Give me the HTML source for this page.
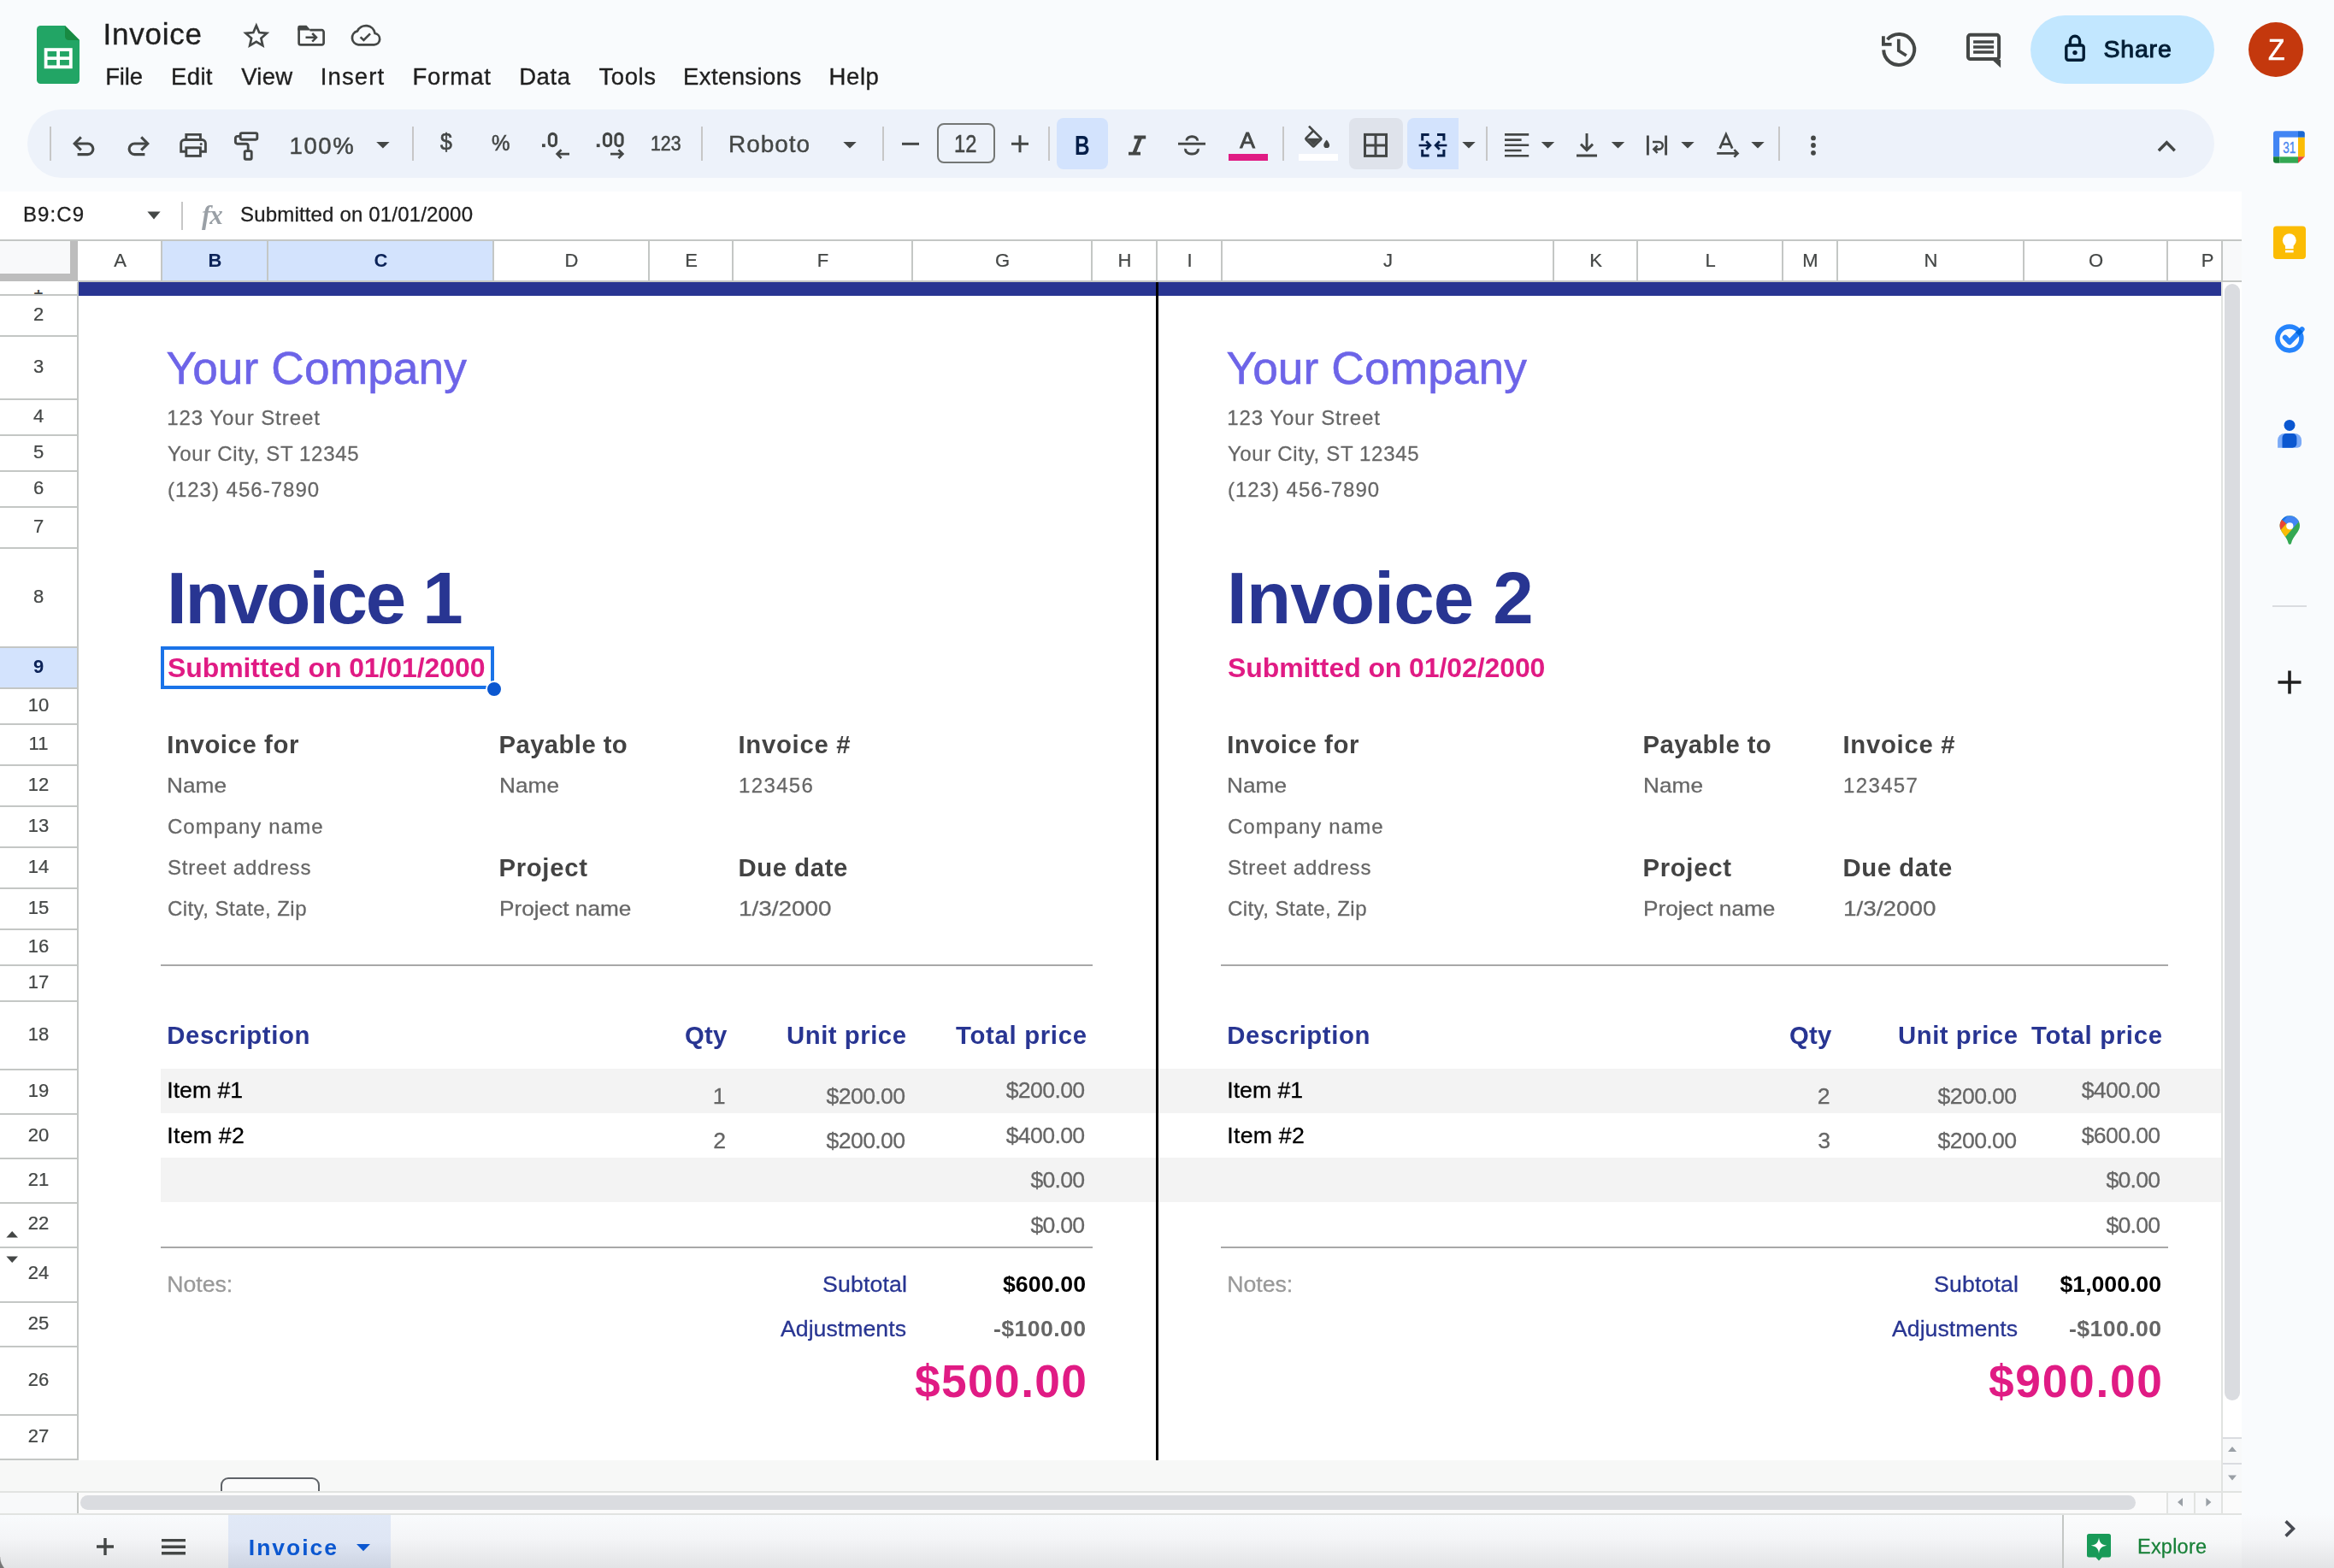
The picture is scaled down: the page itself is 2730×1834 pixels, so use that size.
<!DOCTYPE html>
<html><head><meta charset="utf-8"><title>Invoice - Google Sheets</title>
<style>
html,body{margin:0;padding:0;}
body{width:2730px;height:1834px;overflow:hidden;background:#f9fbfd;position:relative;font-family:"Liberation Sans", sans-serif;}
#r div{position:absolute;}
.t{position:absolute;white-space:pre;font-family:"Liberation Sans", sans-serif;}
svg#ic{position:absolute;left:0;top:0;}
</style></head><body>
<div id="r">
<div style="left:32px;top:128px;width:2558px;height:80px;background:#edf2fa;border-radius:40px;"></div>
<div style="left:1236px;top:138px;width:60px;height:60px;background:#d3e3fd;border-radius:8px;"></div>
<div style="left:1578px;top:138px;width:63px;height:60px;background:#dfe3eb;border-radius:8px;"></div>
<div style="left:1646px;top:138px;width:60px;height:60px;background:#d3e3fd;border-radius:8px 0 0 8px;"></div>
<div style="left:58px;top:148px;width:2px;height:40px;background:#c7c7c7;"></div>
<div style="left:482px;top:148px;width:2px;height:40px;background:#c7c7c7;"></div>
<div style="left:820px;top:148px;width:2px;height:40px;background:#c7c7c7;"></div>
<div style="left:1032px;top:148px;width:2px;height:40px;background:#c7c7c7;"></div>
<div style="left:1226px;top:148px;width:2px;height:40px;background:#c7c7c7;"></div>
<div style="left:1500px;top:148px;width:2px;height:40px;background:#c7c7c7;"></div>
<div style="left:1738px;top:148px;width:2px;height:40px;background:#c7c7c7;"></div>
<div style="left:2080px;top:148px;width:2px;height:40px;background:#c7c7c7;"></div>
<div style="left:1096px;top:144px;width:68px;height:47px;background:transparent;border:2px solid #747775;border-radius:8px;box-sizing:border-box;"></div>
<div style="left:1437px;top:180px;width:46px;height:8px;background:#e01b84;"></div>
<div style="left:1519px;top:180px;width:46px;height:8px;background:#ffffff;"></div>
<div style="left:2375px;top:18px;width:215px;height:80px;background:#c2e7ff;border-radius:40px;"></div>
<div style="left:2630px;top:26px;width:64px;height:64px;background:#c4380d;border-radius:50%;"></div>
<div style="left:0px;top:224px;width:2622px;height:57px;background:#ffffff;"></div>
<div style="left:212px;top:236px;width:2px;height:33px;background:#c7c7c7;"></div>
<div style="left:0px;top:281px;width:2622px;height:1427px;background:#ffffff;"></div>
<div style="left:0px;top:280px;width:2622px;height:2px;background:#c4c7c5;"></div>
<div style="left:2599px;top:282px;width:23px;height:47px;background:#f8f9fa;"></div>
<div style="left:2599px;top:328px;width:23px;height:2px;background:#c4c7c5;"></div>
<div style="left:190px;top:282px;width:387px;height:46px;background:#d3e3fd;"></div>
<div style="left:188px;top:282px;width:2px;height:47px;background:#c4c7c5;"></div>
<div style="left:312px;top:282px;width:2px;height:47px;background:#c4c7c5;"></div>
<div style="left:576px;top:282px;width:2px;height:47px;background:#c4c7c5;"></div>
<div style="left:758px;top:282px;width:2px;height:47px;background:#c4c7c5;"></div>
<div style="left:856px;top:282px;width:2px;height:47px;background:#c4c7c5;"></div>
<div style="left:1066px;top:282px;width:2px;height:47px;background:#c4c7c5;"></div>
<div style="left:1276px;top:282px;width:2px;height:47px;background:#c4c7c5;"></div>
<div style="left:1352px;top:282px;width:2px;height:47px;background:#c4c7c5;"></div>
<div style="left:1428px;top:282px;width:2px;height:47px;background:#c4c7c5;"></div>
<div style="left:1816px;top:282px;width:2px;height:47px;background:#c4c7c5;"></div>
<div style="left:1914px;top:282px;width:2px;height:47px;background:#c4c7c5;"></div>
<div style="left:2084px;top:282px;width:2px;height:47px;background:#c4c7c5;"></div>
<div style="left:2148px;top:282px;width:2px;height:47px;background:#c4c7c5;"></div>
<div style="left:2366px;top:282px;width:2px;height:47px;background:#c4c7c5;"></div>
<div style="left:2534px;top:282px;width:2px;height:47px;background:#c4c7c5;"></div>
<div style="left:2598px;top:282px;width:2px;height:47px;background:#c4c7c5;"></div>
<div style="left:91px;top:328px;width:2508px;height:2px;background:#c4c7c5;"></div>
<div style="left:0px;top:282px;width:91px;height:47px;background:#f8f9fa;"></div>
<div style="left:82px;top:282px;width:9px;height:47px;background:#bdbdbd;"></div>
<div style="left:0px;top:320px;width:91px;height:9px;background:#bdbdbd;"></div>
<div style="left:0px;top:330px;width:90px;height:1377px;background:#ffffff;"></div>
<div style="left:0px;top:758px;width:90px;height:46px;background:#d3e3fd;"></div>
<div style="left:90px;top:330px;width:2px;height:1378px;background:#c4c7c5;"></div>
<div style="left:0px;top:344px;width:91px;height:2px;background:#c4c7c5;"></div>
<div style="left:0px;top:392px;width:91px;height:2px;background:#c4c7c5;"></div>
<div style="left:0px;top:466px;width:91px;height:2px;background:#c4c7c5;"></div>
<div style="left:0px;top:508px;width:91px;height:2px;background:#c4c7c5;"></div>
<div style="left:0px;top:550px;width:91px;height:2px;background:#c4c7c5;"></div>
<div style="left:0px;top:592px;width:91px;height:2px;background:#c4c7c5;"></div>
<div style="left:0px;top:640px;width:91px;height:2px;background:#c4c7c5;"></div>
<div style="left:0px;top:756px;width:91px;height:2px;background:#c4c7c5;"></div>
<div style="left:0px;top:804px;width:91px;height:2px;background:#c4c7c5;"></div>
<div style="left:0px;top:846px;width:91px;height:2px;background:#c4c7c5;"></div>
<div style="left:0px;top:894px;width:91px;height:2px;background:#c4c7c5;"></div>
<div style="left:0px;top:942px;width:91px;height:2px;background:#c4c7c5;"></div>
<div style="left:0px;top:990px;width:91px;height:2px;background:#c4c7c5;"></div>
<div style="left:0px;top:1038px;width:91px;height:2px;background:#c4c7c5;"></div>
<div style="left:0px;top:1086px;width:91px;height:2px;background:#c4c7c5;"></div>
<div style="left:0px;top:1128px;width:91px;height:2px;background:#c4c7c5;"></div>
<div style="left:0px;top:1170px;width:91px;height:2px;background:#c4c7c5;"></div>
<div style="left:0px;top:1250px;width:91px;height:2px;background:#c4c7c5;"></div>
<div style="left:0px;top:1302px;width:91px;height:2px;background:#c4c7c5;"></div>
<div style="left:0px;top:1354px;width:91px;height:2px;background:#c4c7c5;"></div>
<div style="left:0px;top:1406px;width:91px;height:2px;background:#c4c7c5;"></div>
<div style="left:0px;top:1458px;width:91px;height:2px;background:#c4c7c5;"></div>
<div style="left:0px;top:1522px;width:91px;height:2px;background:#c4c7c5;"></div>
<div style="left:0px;top:1574px;width:91px;height:2px;background:#c4c7c5;"></div>
<div style="left:0px;top:1654px;width:91px;height:2px;background:#c4c7c5;"></div>
<div style="left:0px;top:1706px;width:91px;height:2px;background:#c4c7c5;"></div>
<div style="left:0;top:338.6px;width:90px;height:5.6px;overflow:hidden;"><div style="left:38.4px;top:-12.7px;font-size:22px;line-height:22px;color:#444746;font-family:'Liberation Sans',sans-serif">1</div></div>
<div style="left:92px;top:330px;width:2506px;height:16px;background:#283592;"></div>
<div style="left:188px;top:1250px;width:2410px;height:52px;background:#f3f3f3;"></div>
<div style="left:188px;top:1354px;width:2410px;height:52px;background:#f3f3f3;"></div>
<div style="left:188px;top:1128px;width:1090px;height:2px;background:#a8a8a8;"></div>
<div style="left:1428px;top:1128px;width:1108px;height:2px;background:#a8a8a8;"></div>
<div style="left:188px;top:1458px;width:1090px;height:2px;background:#a8a8a8;"></div>
<div style="left:1428px;top:1458px;width:1108px;height:2px;background:#a8a8a8;"></div>
<div style="left:1352px;top:330px;width:3px;height:1378px;background:#000000;"></div>
<div style="left:188px;top:756px;width:390px;height:50px;background:#ffffff;border:4px solid #1a73e8;box-sizing:border-box;"></div>
<div style="left:568px;top:795.5px;width:16px;height:16px;background:#0b57d0;border-radius:50%;border:2px solid #fff;"></div>
<div style="left:2598px;top:330px;width:2px;height:1415px;background:#e1e3e1;"></div>
<div style="left:2600px;top:330px;width:22px;height:1415px;background:#ffffff;"></div>
<div style="left:2602px;top:332px;width:18px;height:1306px;background:#dadce0;border-radius:9px;"></div>
<div style="left:2600px;top:1681px;width:22px;height:2px;background:#dadce0;"></div>
<div style="left:2600px;top:1683px;width:22px;height:28px;background:#f8f9fa;"></div>
<div style="left:2600px;top:1711px;width:22px;height:2px;background:#dadce0;"></div>
<div style="left:2600px;top:1713px;width:22px;height:31px;background:#f8f9fa;"></div>
<div style="left:0px;top:1708px;width:2598px;height:37px;background:#f7f8f7;"></div>
<div style="left:258px;top:1728px;width:116px;height:30px;background:#fbfbfb;border:2px solid #5f6368;border-radius:9px;box-sizing:border-box;"></div>
<div style="left:0px;top:1744px;width:2622px;height:2px;background:#e1e3e1;"></div>
<div style="left:0px;top:1746px;width:2622px;height:24px;background:#fbfbfb;"></div>
<div style="left:0px;top:1746px;width:90px;height:24px;background:#f8f9fa;"></div>
<div style="left:90px;top:1746px;width:2px;height:24px;background:#c4c7c5;"></div>
<div style="left:94px;top:1748.5px;width:2404px;height:17px;background:#dadce0;border-radius:8.5px;"></div>
<div style="left:2534px;top:1746px;width:2px;height:24px;background:#e1e3e1;"></div>
<div style="left:2536px;top:1746px;width:30px;height:24px;background:#f8f9fa;"></div>
<div style="left:2566px;top:1746px;width:2px;height:24px;background:#e1e3e1;"></div>
<div style="left:2568px;top:1746px;width:30px;height:24px;background:#f8f9fa;"></div>
<div style="left:2598px;top:1746px;width:2px;height:24px;background:#e1e3e1;"></div>
<div style="left:0px;top:1770px;width:2730px;height:64px;background:linear-gradient(#f9fbfd 0%,#f4f5f7 45%,#e3e4e6 100%);"></div>
<div style="left:0px;top:1770px;width:2622px;height:2px;background:#e1e3e1;"></div>
<div style="left:267px;top:1772px;width:190px;height:62px;background:linear-gradient(#e1e9f7 0%,#dfe6f4 50%,#cdd4e2 100%);"></div>
<div style="left:2412px;top:1772px;width:2px;height:62px;background:#c4c7c5;"></div>
<div style="left:2414px;top:1772px;width:208px;height:62px;background:linear-gradient(#fbfcfd 0%,#f6f7f8 50%,#e6e7e9 100%);"></div>
<div style="left:2622px;top:210px;width:108px;height:1560px;background:#f9fbfd;"></div>
<div style="left:2658px;top:708px;width:40px;height:2px;background:#dadce0;"></div>
<div style="left:0px;top:1821px;width:20px;height:13px;background:radial-gradient(circle 20px at 20px 0px, rgba(0,0,0,0) 19.2px, #767676 20.4px);"></div>
</div>
<svg id="ic" width="2730" height="1834" viewBox="0 0 2730 1834">
<defs>
  <path id="dd" d="M-7.7,-3.7 H7.7 L0,3.7 Z"/>
  <clipPath id="pin"><path d="M2678.3,603.2 a11.7,11.7 0 0 1 11.7,11.7 c0,7.4 -8.2,11.8 -10,20.6 a1.75,1.75 0 0 1 -3.4,0 c-1.8,-8.8 -10,-13.2 -10,-20.6 a11.7,11.7 0 0 1 11.7,-11.7 Z"/></clipPath>
</defs>
<!-- Sheets logo -->
<g>
  <path d="M47.5,30 H76 L93,47 V93.5 a4.5,4.5 0 0 1 -4.5,4.5 H47.5 a4.5,4.5 0 0 1 -4.5,-4.5 V34.5 a4.5,4.5 0 0 1 4.5,-4.5 Z" fill="#22a565"/>
  <path d="M76,30 L93,47 H80.5 a4.5,4.5 0 0 1 -4.5,-4.5 Z" fill="#188a42"/>
  <rect x="51.7" y="56.2" width="33" height="24" fill="#fff"/>
  <rect x="55.5" y="60" width="10.7" height="6.3" fill="#22a565"/>
  <rect x="70" y="60" width="10.9" height="6.3" fill="#22a565"/>
  <rect x="55.5" y="70" width="10.7" height="6.4" fill="#22a565"/>
  <rect x="70" y="70" width="10.9" height="6.4" fill="#22a565"/>
</g>
<!-- title icons -->
<g fill="none" stroke="#444746" stroke-width="2.7" stroke-linejoin="miter">
  <path d="M299.8,30.0 L303.2,38.1 L312.0,38.9 L305.4,44.7 L307.3,53.3 L299.8,48.8 L292.2,53.3 L294.1,44.7 L287.5,38.9 L296.3,38.1 Z"/>
  <path d="M349.6,33 V50.2 a2.2,2.2 0 0 0 2.2,2.2 H376.4 a2.2,2.2 0 0 0 2.2,-2.2 V37.4 a2.2,2.2 0 0 0 -2.2,-2.2 H362.5"/>
  <path d="M348.2,35.5 V32 a2.2,2.2 0 0 1 2.2,-2.2 H358.5 L363.6,35.5 Z" fill="#444746" stroke="none"/>
  <path d="M357.5,43.8 H369.5 M365.2,39 L370,43.8 L365.2,48.6" stroke-width="2.5"/>
  <path d="M419.2,52.3 H437.6 a6.7,6.7 0 0 0 1,-13.3 a10.9,10.9 0 0 0 -20.6,-2.6 a8.1,8.1 0 0 0 1.2,15.9 Z"/>
  <path d="M421.6,43.4 L425.4,47 L433,39.4" stroke-width="2.6"/>
</g>
<!-- history -->
<g fill="none" stroke="#444746" stroke-width="4">
  <path d="M2203.2,58.4 A18,18 0 1 0 2207.6,46.2"/>
  <path d="M2220.8,45.8 V59.2 L2229.8,65" stroke-width="3.7"/>
  <path d="M2202.9,42.2 V51.8 H2212.6" stroke-width="3.8"/>
</g>
<!-- comment -->
<g>
  <rect x="2302" y="40.8" width="36.1" height="28.3" rx="2.6" fill="none" stroke="#444746" stroke-width="4"/>
  <path d="M2330.2,70 H2340.1 V79.2 Z" fill="#444746"/>
  <path d="M2308.1,49.1 H2332.1 M2308.1,55.1 H2332.1 M2308.1,61.1 H2332.1" stroke="#444746" stroke-width="3.5"/>
</g>
<!-- lock -->
<g fill="none" stroke="#001d35" stroke-width="3.4">
  <rect x="2416.8" y="53" width="20.4" height="17.2" rx="2.5"/>
  <path d="M2421.4,53 V47.8 a5.6,5.6 0 0 1 11.2,0 V53"/>
  <circle cx="2427" cy="61.6" r="2.7" fill="#001d35" stroke="none"/>
</g>

<!-- ===== toolbar icons ===== -->
<g fill="none" stroke="#444746" stroke-width="2.9">
  <path d="M88.6,168 H102.6 a6.3,6.3 0 0 1 0,12.6 H90.6" stroke-width="3.1"/>
  <path d="M94.8,160.4 L87.2,168 L94.8,175.600" stroke-width="3.1"/>
  <path d="M171.4,168 H157.4 a6.3,6.3 0 0 0 0,12.6 H169.4" stroke-width="3.1"/>
  <path d="M165.2,160.4 L172.8,168 L165.2,175.600" stroke-width="3.1"/>
  <path d="M217.8,163.5 V157.4 H234.4 V163.5"/>
  <path d="M217.5,177.3 H211.7 V167.5 a4,4 0 0 1 4,-4 H236.4 a4,4 0 0 1 4,4 V177.3 H234.6"/>
  <rect x="217.8" y="172.8" width="16.6" height="9.6"/>
  <circle cx="235.2" cy="168.6" r="1.5" fill="#444746" stroke="none"/>
  <rect x="281.2" y="155.6" width="19.6" height="7.6" rx="1.6"/>
  <path d="M281.2,159.4 H277.6 a2.2,2.2 0 0 0 -2.2,2.2 V166 a2.2,2.2 0 0 0 2.2,2.2 H288 a2.2,2.2 0 0 1 2.2,2.2 V176.4"/>
  <rect x="286.2" y="176.6" width="8" height="9.6" rx="1.4"/>
</g>
<g fill="#444746">
  <use href="#dd" x="447.9" y="169.7"/>
  <use href="#dd" x="994" y="169.7"/>
  <use href="#dd" x="1718" y="169.8"/>
  <use href="#dd" x="1810.5" y="169.8"/>
  <use href="#dd" x="1892.5" y="169.8"/>
  <use href="#dd" x="1974" y="169.8"/>
  <use href="#dd" x="2056" y="169.8"/>
</g>
<g fill="#444746">
  <rect x="634" y="168.3" width="3.8" height="3.8"/>
  <rect x="697.8" y="168.3" width="3.8" height="3.8"/>
</g>
<g fill="none" stroke="#444746" stroke-width="3.1">
  <rect x="642.3" y="156.4" width="8.2" height="14.2" rx="4.1"/>
  <rect x="706.4" y="156.4" width="8.2" height="14.2" rx="4.1"/>
  <rect x="719.9" y="156.4" width="8.2" height="14.2" rx="4.1"/>
  <path d="M666,180.1 H652 M656.6,175.2 L651.6,180.1 L656.6,185" stroke-width="2.6"/>
  <path d="M714,180.1 H728 M723.4,175.2 L728.4,180.1 L723.4,185" stroke-width="2.6"/>
  <path d="M1055,168.3 H1075" stroke-width="3"/>
  <path d="M1183,168.3 H1203 M1193,158.3 V178.3" stroke-width="3"/>
</g>
<!-- italic -->
<path d="M1326.5,158.6 H1340.2 V162.6 H1335.6 L1329.4,177.8 H1334 V181.6 H1320 V177.8 H1324.8 L1331,162.6 H1326.5 Z" fill="#444746"/>
<!-- strikethrough -->
<g fill="none" stroke="#444746" stroke-width="2.9">
  <path d="M1378,168.2 H1410"/>
  <path d="M1400.6,164.6 a5.8,4.6 0 0 0 -6.4,-4.8 a5.8,4.6 0 0 0 -6.2,4.6"/>
  <path d="M1386.8,174 a6.6,5 0 0 0 7.4,6 a6.4,5 0 0 0 7,-6"/>
</g>
<!-- fill bucket -->
<g>
  <path d="M1531,147.6 L1545,161.6 a1,1 0 0 1 0,1.4 L1537.2,170.8 a1.3,1.3 0 0 1 -1.8,0 L1527.8,163.2 a1.3,1.3 0 0 1 0,-1.8 L1535.8,153.4" fill="none" stroke="#444746" stroke-width="2.7"/>
  <path d="M1528.2,161.8 H1544.6 L1536.4,170 Z" fill="#444746"/>
  <path d="M1551.7,163.4 c0,0 3.4,3.9 3.4,6.3 a3.4,3.4 0 0 1 -6.8,0 c0,-2.4 3.4,-6.3 3.4,-6.3 Z" fill="#444746"/>
</g>
<!-- borders -->
<g fill="none" stroke="#444746" stroke-width="3">
  <rect x="1596.5" y="157.4" width="25" height="25"/>
  <path d="M1609,157.4 V182.4 M1596.5,169.9 H1621.5"/>
</g>
<!-- merge -->
<g fill="none" stroke="#041e49" stroke-width="3">
  <path d="M1671.6,157.5 H1663.7 V164.6 M1663.7,175 V182.1 H1671.6 M1681,157.5 H1688.9 V164.6 M1688.9,175 V182.1 H1681"/>
  <path d="M1659.6,170 H1672.4 M1668.2,165.3 L1672.9,170 L1668.2,174.7" stroke-width="2.7"/>
  <path d="M1692.4,170 H1679.6 M1683.8,165.3 L1679.1,170 L1683.8,174.7" stroke-width="2.7"/>
</g>
<g fill="none" stroke="#444746" stroke-width="2.9">
  <path d="M1760,157.4 H1788.2 M1760,163.6 H1779.6 M1760,169.8 H1788.2 M1760,176 H1779.6 M1760,182.2 H1788.2" stroke-width="2.6"/>
  <path d="M1844,182 H1868 M1856,156 V175.4 M1849,168.6 L1856,175.6 L1863,168.6"/>
  <path d="M1927.4,158.6 V181.6 M1948.6,158.6 V181.6"/>
  <path d="M1933,166 H1940.5 a4.3,4.3 0 0 1 0,8.6 H1935 M1938.6,170.4 L1934.4,174.6 L1938.6,178.8" stroke-width="2.6"/>
  <path d="M2008.2,179.4 H2032 M2028.4,175.2 L2032.6,179.4 L2028.4,183.6" stroke-width="2.6"/>
  <path d="M2011.6,173.6 L2018.9,157 L2026.2,173.6 M2013.9,168.6 H2023.9" stroke-width="2.7"/>
  <path d="M2524.9,176.2 L2534.3,166.8 L2543.7,176.2" stroke-width="3.5"/>
</g>
<g fill="#444746">
  <circle cx="2121" cy="161.4" r="2.9"/>
  <circle cx="2121" cy="170" r="2.9"/>
  <circle cx="2121" cy="178.8" r="2.9"/>
</g>
<path d="M172.4,247.6 H187.6 L180,256.4 Z" fill="#444746"/>

<!-- ===== side panel ===== -->
<g>
  <path d="M2662,153.2 H2688 V160.8 H2666.4 V183.2 H2659 V156.2 a3,3 0 0 1 3,-3 Z" fill="#4285f4"/>
  <path d="M2688,153.2 H2692.800 a3,3 0 0 1 3,3 V160.8 H2688 Z" fill="#1967d2"/>
  <rect x="2688" y="160.8" width="7.8" height="22.4" fill="#fbbc04"/>
  <path d="M2659,183.2 H2666.4 V190.7 H2662 a3,3 0 0 1 -3,-3 Z" fill="#188038"/>
  <rect x="2666.4" y="183.2" width="21.6" height="7.5" fill="#34a853"/>
  <path d="M2688,183.2 H2695.800 L2688,190.7 Z" fill="#ea4335"/>
  <rect x="2666.4" y="160.8" width="21.6" height="22.4" fill="#fff"/>
  <text x="2670.2" y="178.9" font-family="Liberation Sans, sans-serif" font-size="18.4" fill="#4a87ee" stroke="#4a87ee" stroke-width="0.4" textLength="15" lengthAdjust="spacingAndGlyphs">31</text>
</g>
<g>
  <rect x="2659" y="264.6" width="38" height="38.4" rx="4" fill="#fbbc04"/>
  <circle cx="2677.800" cy="281.2" r="7.9" fill="#fff"/>
  <rect x="2673" y="285" width="9.6" height="6" fill="#fff"/>
  <rect x="2673" y="292.6" width="9.6" height="2.8" fill="#fff"/>
</g>
<g fill="none" stroke-linecap="round" stroke-linejoin="round">
  <circle cx="2677.9" cy="395.9" r="14" stroke="#2684fc" stroke-width="5.5"/>
  <path d="M2672.800,394.6 L2678,400.2 L2692.600,385.2" stroke="#2684fc" stroke-width="6"/>
  <path d="M2687.2,390.8 L2691.600,386.200" stroke="#0066da" stroke-width="6" stroke-linecap="butt"/>
</g>
<g>
  <circle cx="2678" cy="497.4" r="6.5" fill="#0b57d0"/>
  <path d="M2664.1,523.8 V515 a8,8 0 0 1 8,-8 H2684 a8,8 0 0 1 8,8 V518.800 a5,5 0 0 1 -5,5 Z" fill="#7baaf7"/>
  <path d="M2669.5,523.8 V512 a5,5 0 0 1 5,-5 H2681.400 a5,5 0 0 1 5,5 V518.800 a5,5 0 0 1 -5,5 Z" fill="#0b57d0"/>
</g>
<g clip-path="url(#pin)">
  <rect x="2660" y="598" width="36" height="42" fill="#34a853"/>
  <path d="M2662,601.3 V598 H2696 L2695.500,602.8 L2681.050,618.950 Z" fill="#4285f4"/>
  <path d="M2662,601.3 L2674.160,612.570 L2664.1,623.8 H2660 V601.3 Z" fill="#ea4335"/>
  <path d="M2664.1,623.8 L2674.160,612.570 L2681.050,618.950 L2669.9,631.4 H2660 V623.8 Z" fill="#fbbc04"/>
  <path d="M2662,601.3 L2671,609.6 L2676,603 L2668,598 Z" fill="#1a73e8"/>
  <circle cx="2678.3" cy="615.3" r="4.1" fill="#fff"/>
</g>
<path d="M2664.5,798 H2691.5 M2678,784.5 V811.5" stroke="#1f1f1f" stroke-width="3.6" fill="none"/>

<!-- ===== bottom ===== -->
<path d="M113,1809 H133 M123,1799 V1819" stroke="#444746" stroke-width="3.4" fill="none"/>
<path d="M189,1801.600 H217 M189,1809.200 H217 M189,1816.800 H217" stroke="#444746" stroke-width="3.4" fill="none"/>
<path d="M417,1806 H433 L425,1814.200 Z" fill="#0b57d0"/>
<g>
  <path d="M2443.5,1794 H2466.5 a2.5,2.5 0 0 1 2.5,2.5 V1819 a2.5,2.5 0 0 1 -2.5,2.5 H2458.600 L2455,1825.600 L2451.400,1821.500 H2443.500 a2.5,2.5 0 0 1 -2.5,-2.5 V1796.500 a2.5,2.5 0 0 1 2.5,-2.5 Z" fill="#189a58"/>
  <path d="M2455,1798.600 C2455.800,1804.600 2458,1806.900 2464.200,1807.800 C2458,1808.700 2455.800,1811 2455,1817 C2454.200,1811 2452,1808.700 2445.800,1807.800 C2452,1806.900 2454.200,1804.600 2455,1798.600 Z" fill="#fff"/>
</g>
<path d="M2673.600,1779.400 L2682.400,1788 L2673.600,1796.600" stroke="#474a52" stroke-width="3.6" fill="none"/>
<g fill="#9aa0a6">
  <path d="M2606,1698 H2616 L2611,1692 Z"/>
  <path d="M2606,1725.600 H2616 L2611,1731.600 Z"/>
  <path d="M2553,1752 V1762 L2547,1757 Z"/>
  <path d="M2580.400,1752 V1762 L2586.400,1757 Z"/>
</g>
<g fill="#444746">
  <path d="M7.4,1447.400 H21 L14.200,1440 Z"/>
  <path d="M7.4,1469.600 H21 L14.200,1477 Z"/>
</g>

</svg>
<div id="tx" style="will-change:transform;position:absolute;left:0;top:0;width:2730px;height:1834px;">
<div class="t" style="left:133.16px;top:293.98px;font-size:22px;line-height:22px;color:#444746;-webkit-text-stroke:0.24px #444746;">A</div>
<div class="t" style="left:243.55px;top:293.98px;font-size:22px;line-height:22px;color:#0c2358;font-weight:700;">B</div>
<div class="t" style="left:437.55px;top:293.98px;font-size:22px;line-height:22px;color:#0c2358;font-weight:700;">C</div>
<div class="t" style="left:660.55px;top:293.98px;font-size:22px;line-height:22px;color:#444746;-webkit-text-stroke:0.24px #444746;">D</div>
<div class="t" style="left:801.16px;top:293.98px;font-size:22px;line-height:22px;color:#444746;-webkit-text-stroke:0.24px #444746;">E</div>
<div class="t" style="left:955.77px;top:293.98px;font-size:22px;line-height:22px;color:#444746;-webkit-text-stroke:0.24px #444746;">F</div>
<div class="t" style="left:1163.94px;top:293.98px;font-size:22px;line-height:22px;color:#444746;-webkit-text-stroke:0.24px #444746;">G</div>
<div class="t" style="left:1307.55px;top:293.98px;font-size:22px;line-height:22px;color:#444746;-webkit-text-stroke:0.24px #444746;">H</div>
<div class="t" style="left:1388.44px;top:293.98px;font-size:22px;line-height:22px;color:#444746;-webkit-text-stroke:0.24px #444746;">I</div>
<div class="t" style="left:1618.00px;top:293.98px;font-size:22px;line-height:22px;color:#444746;-webkit-text-stroke:0.24px #444746;">J</div>
<div class="t" style="left:1859.16px;top:293.98px;font-size:22px;line-height:22px;color:#444746;-webkit-text-stroke:0.24px #444746;">K</div>
<div class="t" style="left:1994.38px;top:293.98px;font-size:22px;line-height:22px;color:#444746;-webkit-text-stroke:0.24px #444746;">L</div>
<div class="t" style="left:2108.34px;top:293.98px;font-size:22px;line-height:22px;color:#444746;-webkit-text-stroke:0.24px #444746;">M</div>
<div class="t" style="left:2250.55px;top:293.98px;font-size:22px;line-height:22px;color:#444746;-webkit-text-stroke:0.24px #444746;">N</div>
<div class="t" style="left:2442.94px;top:293.98px;font-size:22px;line-height:22px;color:#444746;-webkit-text-stroke:0.24px #444746;">O</div>
<div class="t" style="left:2574.66px;top:293.98px;font-size:22px;line-height:22px;color:#444746;-webkit-text-stroke:0.24px #444746;">P</div>
<div class="t" style="left:38.88px;top:357.18px;font-size:22px;line-height:22px;color:#444746;-webkit-text-stroke:0.24px #444746;">2</div>
<div class="t" style="left:38.88px;top:418.18px;font-size:22px;line-height:22px;color:#444746;-webkit-text-stroke:0.24px #444746;">3</div>
<div class="t" style="left:38.88px;top:476.18px;font-size:22px;line-height:22px;color:#444746;-webkit-text-stroke:0.24px #444746;">4</div>
<div class="t" style="left:38.88px;top:518.18px;font-size:22px;line-height:22px;color:#444746;-webkit-text-stroke:0.24px #444746;">5</div>
<div class="t" style="left:38.88px;top:560.18px;font-size:22px;line-height:22px;color:#444746;-webkit-text-stroke:0.24px #444746;">6</div>
<div class="t" style="left:38.88px;top:605.18px;font-size:22px;line-height:22px;color:#444746;-webkit-text-stroke:0.24px #444746;">7</div>
<div class="t" style="left:38.88px;top:687.18px;font-size:22px;line-height:22px;color:#444746;-webkit-text-stroke:0.24px #444746;">8</div>
<div class="t" style="left:38.88px;top:769.18px;font-size:22px;line-height:22px;color:#0c2358;font-weight:700;">9</div>
<div class="t" style="left:32.76px;top:814.18px;font-size:22px;line-height:22px;color:#444746;-webkit-text-stroke:0.24px #444746;">10</div>
<div class="t" style="left:33.58px;top:859.18px;font-size:22px;line-height:22px;color:#444746;-webkit-text-stroke:0.24px #444746;">11</div>
<div class="t" style="left:32.76px;top:907.18px;font-size:22px;line-height:22px;color:#444746;-webkit-text-stroke:0.24px #444746;">12</div>
<div class="t" style="left:32.76px;top:955.18px;font-size:22px;line-height:22px;color:#444746;-webkit-text-stroke:0.24px #444746;">13</div>
<div class="t" style="left:32.76px;top:1003.18px;font-size:22px;line-height:22px;color:#444746;-webkit-text-stroke:0.24px #444746;">14</div>
<div class="t" style="left:32.76px;top:1051.18px;font-size:22px;line-height:22px;color:#444746;-webkit-text-stroke:0.24px #444746;">15</div>
<div class="t" style="left:32.76px;top:1096.18px;font-size:22px;line-height:22px;color:#444746;-webkit-text-stroke:0.24px #444746;">16</div>
<div class="t" style="left:32.76px;top:1138.18px;font-size:22px;line-height:22px;color:#444746;-webkit-text-stroke:0.24px #444746;">17</div>
<div class="t" style="left:32.76px;top:1199.18px;font-size:22px;line-height:22px;color:#444746;-webkit-text-stroke:0.24px #444746;">18</div>
<div class="t" style="left:32.76px;top:1265.18px;font-size:22px;line-height:22px;color:#444746;-webkit-text-stroke:0.24px #444746;">19</div>
<div class="t" style="left:32.76px;top:1317.18px;font-size:22px;line-height:22px;color:#444746;-webkit-text-stroke:0.24px #444746;">20</div>
<div class="t" style="left:32.76px;top:1369.18px;font-size:22px;line-height:22px;color:#444746;-webkit-text-stroke:0.24px #444746;">21</div>
<div class="t" style="left:32.76px;top:1420.38px;font-size:22px;line-height:22px;color:#444746;-webkit-text-stroke:0.24px #444746;">22</div>
<div class="t" style="left:32.76px;top:1478.38px;font-size:22px;line-height:22px;color:#444746;-webkit-text-stroke:0.24px #444746;">24</div>
<div class="t" style="left:32.76px;top:1537.18px;font-size:22px;line-height:22px;color:#444746;-webkit-text-stroke:0.24px #444746;">25</div>
<div class="t" style="left:32.76px;top:1603.18px;font-size:22px;line-height:22px;color:#444746;-webkit-text-stroke:0.24px #444746;">26</div>
<div class="t" style="left:32.76px;top:1669.18px;font-size:22px;line-height:22px;color:#444746;-webkit-text-stroke:0.24px #444746;">27</div>
<div class="t" style="left:194.40px;top:404.28px;font-size:53.3px;line-height:53.3px;color:#6d64e8;letter-spacing:0.091px;-webkit-text-stroke:0.59px #6d64e8;">Your Company</div>
<div class="t" style="left:195.30px;top:477.18px;font-size:24px;line-height:24px;color:#666666;letter-spacing:0.938px;-webkit-text-stroke:0.26px #666666;">123 Your Street</div>
<div class="t" style="left:195.90px;top:519.08px;font-size:24px;line-height:24px;color:#666666;letter-spacing:0.662px;-webkit-text-stroke:0.26px #666666;">Your City, ST 12345</div>
<div class="t" style="left:195.90px;top:560.98px;font-size:24px;line-height:24px;color:#666666;letter-spacing:1.006px;-webkit-text-stroke:0.26px #666666;">(123) 456-7890</div>
<div class="t" style="left:195.00px;top:657.09px;font-size:85.3px;line-height:85.3px;color:#283592;letter-spacing:-2.295px;font-weight:700;">Invoice 1</div>
<div class="t" style="left:196.00px;top:764.61px;font-size:32px;line-height:32px;color:#e01b84;letter-spacing:-0.089px;font-weight:700;">Submitted on 01/01/2000</div>
<div class="t" style="left:195.30px;top:856.20px;font-size:29.3px;line-height:29.3px;color:#434343;letter-spacing:0.584px;font-weight:700;">Invoice for</div>
<div class="t" style="left:583.50px;top:856.20px;font-size:29.3px;line-height:29.3px;color:#434343;letter-spacing:0.406px;font-weight:700;">Payable to</div>
<div class="t" style="left:863.50px;top:856.20px;font-size:29.3px;line-height:29.3px;color:#434343;letter-spacing:0.714px;font-weight:700;">Invoice #</div>
<div class="t" style="left:195.30px;top:907.08px;font-size:24px;line-height:24px;color:#666666;transform:scaleX(1.0932);transform-origin:0 0;-webkit-text-stroke:0.26px #666666;">Name</div>
<div class="t" style="left:583.50px;top:907.08px;font-size:24px;line-height:24px;color:#666666;transform:scaleX(1.0932);transform-origin:0 0;-webkit-text-stroke:0.26px #666666;">Name</div>
<div class="t" style="left:864.00px;top:907.08px;font-size:24px;line-height:24px;color:#666666;letter-spacing:1.361px;-webkit-text-stroke:0.26px #666666;">123456</div>
<div class="t" style="left:195.90px;top:954.88px;font-size:24px;line-height:24px;color:#666666;letter-spacing:1.125px;-webkit-text-stroke:0.26px #666666;">Company name</div>
<div class="t" style="left:195.90px;top:1002.98px;font-size:24px;line-height:24px;color:#666666;letter-spacing:0.885px;-webkit-text-stroke:0.26px #666666;">Street address</div>
<div class="t" style="left:583.50px;top:1000.20px;font-size:29.3px;line-height:29.3px;color:#434343;letter-spacing:0.679px;font-weight:700;">Project</div>
<div class="t" style="left:863.50px;top:1000.20px;font-size:29.3px;line-height:29.3px;color:#434343;letter-spacing:0.581px;font-weight:700;">Due date</div>
<div class="t" style="left:195.90px;top:1051.08px;font-size:24px;line-height:24px;color:#666666;letter-spacing:0.466px;-webkit-text-stroke:0.26px #666666;">City, State, Zip</div>
<div class="t" style="left:583.50px;top:1051.08px;font-size:24px;line-height:24px;color:#666666;transform:scaleX(1.0919);transform-origin:0 0;-webkit-text-stroke:0.26px #666666;">Project name</div>
<div class="t" style="left:864.00px;top:1051.08px;font-size:24px;line-height:24px;color:#666666;transform:scaleX(1.1614);transform-origin:0 0;-webkit-text-stroke:0.26px #666666;">1/3/2000</div>
<div class="t" style="left:195.30px;top:1196.20px;font-size:29.3px;line-height:29.3px;color:#283592;letter-spacing:0.583px;font-weight:700;">Description</div>
<div class="t" style="left:800.90px;top:1196.20px;font-size:29.3px;line-height:29.3px;color:#283592;letter-spacing:0.328px;font-weight:700;">Qty</div>
<div class="t" style="left:920.00px;top:1196.20px;font-size:29.3px;line-height:29.3px;color:#283592;letter-spacing:0.542px;font-weight:700;">Unit price</div>
<div class="t" style="left:1118.00px;top:1196.20px;font-size:29.3px;line-height:29.3px;color:#283592;letter-spacing:0.702px;font-weight:700;">Total price</div>
<div class="t" style="left:195.30px;top:1262.42px;font-size:26.67px;line-height:26.67px;color:#000000;-webkit-text-stroke:0.29px #000000;">Item #1</div>
<div class="t" style="left:195.30px;top:1314.72px;font-size:26.67px;line-height:26.67px;color:#000000;letter-spacing:0.266px;-webkit-text-stroke:0.29px #000000;">Item #2</div>
<div class="t" style="left:833.67px;top:1269.02px;font-size:26.67px;line-height:26.67px;color:#666666;-webkit-text-stroke:0.29px #666666;">1</div>
<div class="t" style="left:834.17px;top:1321.12px;font-size:26.67px;line-height:26.67px;color:#666666;-webkit-text-stroke:0.29px #666666;">2</div>
<div class="t" style="left:966.60px;top:1269.02px;font-size:26.67px;line-height:26.67px;color:#666666;letter-spacing:-0.643px;-webkit-text-stroke:0.29px #666666;">$200.00</div>
<div class="t" style="left:966.60px;top:1321.12px;font-size:26.67px;line-height:26.67px;color:#666666;letter-spacing:-0.643px;-webkit-text-stroke:0.29px #666666;">$200.00</div>
<div class="t" style="left:1176.70px;top:1262.42px;font-size:26.67px;line-height:26.67px;color:#666666;letter-spacing:-0.643px;-webkit-text-stroke:0.29px #666666;">$200.00</div>
<div class="t" style="left:1176.70px;top:1314.72px;font-size:26.67px;line-height:26.67px;color:#666666;letter-spacing:-0.643px;-webkit-text-stroke:0.29px #666666;">$400.00</div>
<div class="t" style="left:1205.40px;top:1367.42px;font-size:26.67px;line-height:26.67px;color:#666666;letter-spacing:-0.730px;-webkit-text-stroke:0.29px #666666;">$0.00</div>
<div class="t" style="left:1205.40px;top:1419.62px;font-size:26.67px;line-height:26.67px;color:#666666;letter-spacing:-0.730px;-webkit-text-stroke:0.29px #666666;">$0.00</div>
<div class="t" style="left:195.30px;top:1489.22px;font-size:26.67px;line-height:26.67px;color:#999999;letter-spacing:-0.029px;-webkit-text-stroke:0.29px #999999;">Notes:</div>
<div class="t" style="left:962.00px;top:1489.42px;font-size:26.67px;line-height:26.67px;color:#283592;letter-spacing:0.167px;-webkit-text-stroke:0.29px #283592;">Subtotal</div>
<div class="t" style="left:1172.90px;top:1489.42px;font-size:26.67px;line-height:26.67px;color:#000000;letter-spacing:0.123px;font-weight:700;">$600.00</div>
<div class="t" style="left:913.00px;top:1541.12px;font-size:26.67px;line-height:26.67px;color:#283592;letter-spacing:0.031px;-webkit-text-stroke:0.29px #283592;">Adjustments</div>
<div class="t" style="left:1162.00px;top:1541.12px;font-size:26.67px;line-height:26.67px;color:#666666;letter-spacing:0.395px;font-weight:700;">-$100.00</div>
<div class="t" style="left:1070.00px;top:1588.88px;font-size:53.3px;line-height:53.3px;color:#e01b84;letter-spacing:1.391px;font-weight:700;">$500.00</div>
<div class="t" style="left:1434.40px;top:404.28px;font-size:53.3px;line-height:53.3px;color:#6d64e8;letter-spacing:0.091px;-webkit-text-stroke:0.59px #6d64e8;">Your Company</div>
<div class="t" style="left:1435.30px;top:477.18px;font-size:24px;line-height:24px;color:#666666;letter-spacing:0.938px;-webkit-text-stroke:0.26px #666666;">123 Your Street</div>
<div class="t" style="left:1435.90px;top:519.08px;font-size:24px;line-height:24px;color:#666666;letter-spacing:0.662px;-webkit-text-stroke:0.26px #666666;">Your City, ST 12345</div>
<div class="t" style="left:1435.90px;top:560.98px;font-size:24px;line-height:24px;color:#666666;letter-spacing:1.006px;-webkit-text-stroke:0.26px #666666;">(123) 456-7890</div>
<div class="t" style="left:1435.00px;top:657.09px;font-size:85.3px;line-height:85.3px;color:#283592;letter-spacing:-0.783px;font-weight:700;">Invoice 2</div>
<div class="t" style="left:1436.00px;top:764.61px;font-size:32px;line-height:32px;color:#e01b84;letter-spacing:-0.094px;font-weight:700;">Submitted on 01/02/2000</div>
<div class="t" style="left:1435.30px;top:856.20px;font-size:29.3px;line-height:29.3px;color:#434343;letter-spacing:0.584px;font-weight:700;">Invoice for</div>
<div class="t" style="left:1921.50px;top:856.20px;font-size:29.3px;line-height:29.3px;color:#434343;letter-spacing:0.406px;font-weight:700;">Payable to</div>
<div class="t" style="left:2155.50px;top:856.20px;font-size:29.3px;line-height:29.3px;color:#434343;letter-spacing:0.714px;font-weight:700;">Invoice #</div>
<div class="t" style="left:1435.30px;top:907.08px;font-size:24px;line-height:24px;color:#666666;transform:scaleX(1.0932);transform-origin:0 0;-webkit-text-stroke:0.26px #666666;">Name</div>
<div class="t" style="left:1921.50px;top:907.08px;font-size:24px;line-height:24px;color:#666666;transform:scaleX(1.0932);transform-origin:0 0;-webkit-text-stroke:0.26px #666666;">Name</div>
<div class="t" style="left:2156.00px;top:907.08px;font-size:24px;line-height:24px;color:#666666;letter-spacing:1.361px;-webkit-text-stroke:0.26px #666666;">123457</div>
<div class="t" style="left:1435.90px;top:954.88px;font-size:24px;line-height:24px;color:#666666;letter-spacing:1.125px;-webkit-text-stroke:0.26px #666666;">Company name</div>
<div class="t" style="left:1435.90px;top:1002.98px;font-size:24px;line-height:24px;color:#666666;letter-spacing:0.885px;-webkit-text-stroke:0.26px #666666;">Street address</div>
<div class="t" style="left:1921.50px;top:1000.20px;font-size:29.3px;line-height:29.3px;color:#434343;letter-spacing:0.679px;font-weight:700;">Project</div>
<div class="t" style="left:2155.50px;top:1000.20px;font-size:29.3px;line-height:29.3px;color:#434343;letter-spacing:0.581px;font-weight:700;">Due date</div>
<div class="t" style="left:1435.90px;top:1051.08px;font-size:24px;line-height:24px;color:#666666;letter-spacing:0.466px;-webkit-text-stroke:0.26px #666666;">City, State, Zip</div>
<div class="t" style="left:1921.50px;top:1051.08px;font-size:24px;line-height:24px;color:#666666;transform:scaleX(1.0919);transform-origin:0 0;-webkit-text-stroke:0.26px #666666;">Project name</div>
<div class="t" style="left:2156.00px;top:1051.08px;font-size:24px;line-height:24px;color:#666666;transform:scaleX(1.1614);transform-origin:0 0;-webkit-text-stroke:0.26px #666666;">1/3/2000</div>
<div class="t" style="left:1435.30px;top:1196.20px;font-size:29.3px;line-height:29.3px;color:#283592;letter-spacing:0.583px;font-weight:700;">Description</div>
<div class="t" style="left:2092.90px;top:1196.20px;font-size:29.3px;line-height:29.3px;color:#283592;letter-spacing:0.328px;font-weight:700;">Qty</div>
<div class="t" style="left:2220.00px;top:1196.20px;font-size:29.3px;line-height:29.3px;color:#283592;letter-spacing:0.542px;font-weight:700;">Unit price</div>
<div class="t" style="left:2376.00px;top:1196.20px;font-size:29.3px;line-height:29.3px;color:#283592;letter-spacing:0.702px;font-weight:700;">Total price</div>
<div class="t" style="left:1435.30px;top:1262.42px;font-size:26.67px;line-height:26.67px;color:#000000;-webkit-text-stroke:0.29px #000000;">Item #1</div>
<div class="t" style="left:1435.30px;top:1314.72px;font-size:26.67px;line-height:26.67px;color:#000000;letter-spacing:0.266px;-webkit-text-stroke:0.29px #000000;">Item #2</div>
<div class="t" style="left:2125.67px;top:1269.02px;font-size:26.67px;line-height:26.67px;color:#666666;-webkit-text-stroke:0.29px #666666;">2</div>
<div class="t" style="left:2126.17px;top:1321.12px;font-size:26.67px;line-height:26.67px;color:#666666;-webkit-text-stroke:0.29px #666666;">3</div>
<div class="t" style="left:2266.60px;top:1269.02px;font-size:26.67px;line-height:26.67px;color:#666666;letter-spacing:-0.643px;-webkit-text-stroke:0.29px #666666;">$200.00</div>
<div class="t" style="left:2266.60px;top:1321.12px;font-size:26.67px;line-height:26.67px;color:#666666;letter-spacing:-0.643px;-webkit-text-stroke:0.29px #666666;">$200.00</div>
<div class="t" style="left:2434.70px;top:1262.42px;font-size:26.67px;line-height:26.67px;color:#666666;letter-spacing:-0.643px;-webkit-text-stroke:0.29px #666666;">$400.00</div>
<div class="t" style="left:2434.70px;top:1314.72px;font-size:26.67px;line-height:26.67px;color:#666666;letter-spacing:-0.643px;-webkit-text-stroke:0.29px #666666;">$600.00</div>
<div class="t" style="left:2463.40px;top:1367.42px;font-size:26.67px;line-height:26.67px;color:#666666;letter-spacing:-0.730px;-webkit-text-stroke:0.29px #666666;">$0.00</div>
<div class="t" style="left:2463.40px;top:1419.62px;font-size:26.67px;line-height:26.67px;color:#666666;letter-spacing:-0.730px;-webkit-text-stroke:0.29px #666666;">$0.00</div>
<div class="t" style="left:1435.30px;top:1489.22px;font-size:26.67px;line-height:26.67px;color:#999999;letter-spacing:-0.029px;-webkit-text-stroke:0.29px #999999;">Notes:</div>
<div class="t" style="left:2262.00px;top:1489.42px;font-size:26.67px;line-height:26.67px;color:#283592;letter-spacing:0.167px;-webkit-text-stroke:0.29px #283592;">Subtotal</div>
<div class="t" style="left:2409.50px;top:1489.42px;font-size:26.67px;line-height:26.67px;color:#000000;letter-spacing:-0.012px;font-weight:700;">$1,000.00</div>
<div class="t" style="left:2213.00px;top:1541.12px;font-size:26.67px;line-height:26.67px;color:#283592;letter-spacing:0.031px;-webkit-text-stroke:0.29px #283592;">Adjustments</div>
<div class="t" style="left:2420.00px;top:1541.12px;font-size:26.67px;line-height:26.67px;color:#666666;letter-spacing:0.395px;font-weight:700;">-$100.00</div>
<div class="t" style="left:2326.00px;top:1588.88px;font-size:53.3px;line-height:53.3px;color:#e01b84;letter-spacing:1.724px;font-weight:700;">$900.00</div>
<div class="t" style="left:120.40px;top:22.17px;font-size:35px;line-height:35px;color:#1f1f1f;letter-spacing:0.782px;-webkit-text-stroke:0.35px #1f1f1f;">Invoice</div>
<div class="t" style="left:123.20px;top:76.32px;font-size:27.5px;line-height:27.5px;color:#1f1f1f;letter-spacing:-0.171px;-webkit-text-stroke:0.35px #1f1f1f;">File</div>
<div class="t" style="left:200.00px;top:76.32px;font-size:27.5px;line-height:27.5px;color:#1f1f1f;letter-spacing:0.370px;-webkit-text-stroke:0.35px #1f1f1f;">Edit</div>
<div class="t" style="left:282.20px;top:76.32px;font-size:27.5px;line-height:27.5px;color:#1f1f1f;letter-spacing:0.297px;-webkit-text-stroke:0.35px #1f1f1f;">View</div>
<div class="t" style="left:374.80px;top:76.32px;font-size:27.5px;line-height:27.5px;color:#1f1f1f;letter-spacing:1.124px;-webkit-text-stroke:0.35px #1f1f1f;">Insert</div>
<div class="t" style="left:482.40px;top:76.32px;font-size:27.5px;line-height:27.5px;color:#1f1f1f;letter-spacing:0.901px;-webkit-text-stroke:0.35px #1f1f1f;">Format</div>
<div class="t" style="left:607.20px;top:76.32px;font-size:27.5px;line-height:27.5px;color:#1f1f1f;letter-spacing:0.569px;-webkit-text-stroke:0.35px #1f1f1f;">Data</div>
<div class="t" style="left:700.40px;top:76.32px;font-size:27.5px;line-height:27.5px;color:#1f1f1f;letter-spacing:0.599px;-webkit-text-stroke:0.35px #1f1f1f;">Tools</div>
<div class="t" style="left:799.00px;top:76.32px;font-size:27.5px;line-height:27.5px;color:#1f1f1f;letter-spacing:0.408px;-webkit-text-stroke:0.35px #1f1f1f;">Extensions</div>
<div class="t" style="left:969.60px;top:76.32px;font-size:27.5px;line-height:27.5px;color:#1f1f1f;letter-spacing:0.579px;-webkit-text-stroke:0.35px #1f1f1f;">Help</div>
<div class="t" style="left:338.60px;top:156.52px;font-size:27.5px;line-height:27.5px;color:#444746;letter-spacing:1.552px;-webkit-text-stroke:0.5px #444746;">100%</div>
<div class="t" style="left:761.00px;top:155.68px;font-size:24px;line-height:24px;color:#444746;transform:scaleX(0.8890);transform-origin:0 0;-webkit-text-stroke:0.6px #444746;">123</div>
<div class="t" style="left:852.00px;top:154.90px;font-size:28px;line-height:28px;color:#444746;letter-spacing:0.941px;-webkit-text-stroke:0.4px #444746;">Roboto</div>
<div class="t" style="left:1116.00px;top:153.43px;font-size:29.5px;line-height:29.5px;color:#444746;transform:scaleX(0.8042);transform-origin:0 0;-webkit-text-stroke:0.5px #444746;">12</div>
<div class="t" style="left:514.80px;top:153.14px;font-size:27px;line-height:27px;color:#444746;transform:scaleX(0.9181);transform-origin:0 0;-webkit-text-stroke:0.7px #444746;">$</div>
<div class="t" style="left:574.80px;top:154.29px;font-size:26px;line-height:26px;color:#444746;transform:scaleX(0.9297);transform-origin:0 0;-webkit-text-stroke:0.6px #444746;">%</div>
<div class="t" style="left:27.00px;top:239.18px;font-size:24px;line-height:24px;color:#1f1f1f;letter-spacing:1.074px;-webkit-text-stroke:0.3px #1f1f1f;">B9:C9</div>
<div class="t" style="left:281.00px;top:239.18px;font-size:24px;line-height:24px;color:#1f1f1f;letter-spacing:0.172px;-webkit-text-stroke:0.3px #1f1f1f;">Submitted on 01/01/2000</div>
<div class="t" style="left:2460.40px;top:43.37px;font-size:28.5px;line-height:28.5px;color:#001d35;letter-spacing:0.834px;-webkit-text-stroke:1.0px #001d35;">Share</div>
<div class="t" style="left:2652.50px;top:40.84px;font-size:34.8px;line-height:34.8px;color:#ffffff;transform:scaleX(0.9123);transform-origin:0 0;-webkit-text-stroke:0.7px #ffffff;">Z</div>
<div class="t" style="left:290.80px;top:1796.57px;font-size:26.5px;line-height:26.5px;color:#0b57d0;letter-spacing:1.979px;font-weight:700;">Invoice</div>
<div class="t" style="left:2500.00px;top:1797.81px;font-size:23.5px;line-height:23.5px;color:#188038;letter-spacing:0.219px;-webkit-text-stroke:0.26px #188038;">Explore</div>
<div class="t" style="left:1257.20px;top:154.58px;font-size:30.5px;line-height:30.5px;color:#041e49;font-weight:700;transform:scaleX(0.7989);transform-origin:0 0;">B</div>
<div class="t" style="left:1450.20px;top:151.17px;font-size:26.5px;line-height:26.5px;color:#444746;-webkit-text-stroke:0.9px #444746;">A</div>
<div class="t" style="left:236.00px;top:235.76px;font-size:31px;line-height:31px;color:#9aa0a6;font-weight:700;font-family:'Liberation Serif',serif;font-style:italic;letter-spacing:-1px;">fx</div>
</div>
</body></html>
